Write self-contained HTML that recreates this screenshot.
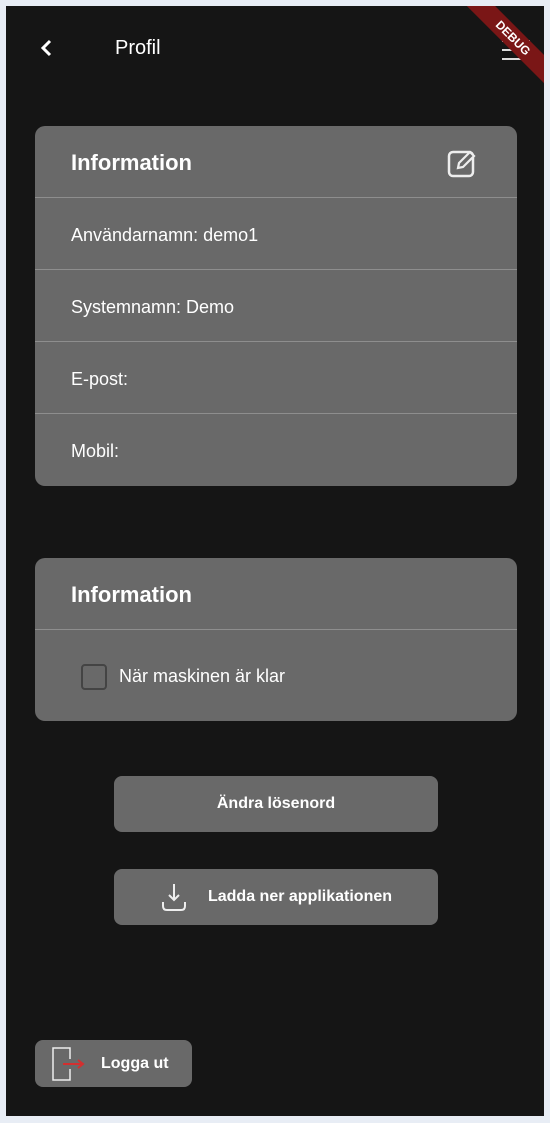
<!DOCTYPE html>
<html><head><meta charset="utf-8"><style>
*{margin:0;padding:0;box-sizing:border-box}
body{width:550px;height:1123px;background:#e8edf5;font-family:"Liberation Sans",sans-serif;position:relative;overflow:hidden;color:#fff}
.app{position:absolute;left:6px;top:6px;width:538px;height:1110px;background:#151515;overflow:hidden}
.card{position:absolute;left:29px;width:482px;background:#696969;border-radius:10px}
.hd{height:72px;font-size:22px;font-weight:bold;padding:24px 0 0 36px;border-bottom:1px solid #8e8e8e}
.row{height:72px;font-size:18px;padding:27px 0 0 36px;border-bottom:1px solid #8e8e8e}
.row:last-child{border-bottom:none}
.btn{position:absolute;background:#696969;border-radius:8px;font-weight:bold;font-size:16px;display:flex;align-items:center;justify-content:center}
.ribbon{position:absolute;right:-44px;top:22px;width:150px;height:20px;background:#7a1616;transform:rotate(45deg);font-size:12px;font-weight:bold;text-align:center;line-height:20px}
</style></head><body>
<div class="app">
<svg style="position:absolute;left:34px;top:33px" width="14" height="18" viewBox="0 0 14 18"><path d="M10 2 L3 9 L10 16" stroke="#fff" stroke-width="3" fill="none"/></svg>
<div style="position:absolute;left:109px;top:31px;font-size:20px">Profil</div>
<div style="position:absolute;left:496px;top:34px;width:28px;height:2px;background:#ddd;box-shadow:0 9px 0 #ddd,0 18px 0 #ddd"></div>
<div class="ribbon">DEBUG</div>

<div class="card" style="top:120px">
<div class="hd">Information</div>
<svg style="position:absolute;right:40px;top:22px" width="30" height="30" viewBox="0 0 30 30"><rect x="2" y="4" width="24" height="24" rx="4" stroke="#eee" stroke-width="2.5" fill="none"/><path d="M11 20 L12 15 L23 4 L27 8 L16 19 Z" stroke="#eee" stroke-width="2.2" fill="#696969"/></svg>
<div class="row">Användarnamn: demo1</div>
<div class="row">Systemnamn: Demo</div>
<div class="row">E-post:</div>
<div class="row">Mobil:</div>
</div>

<div class="card" style="top:552px;height:163px">
<div class="hd">Information</div>
<div style="position:absolute;left:46px;top:106px;width:26px;height:26px;border:2.5px solid #444;border-radius:4px"></div>
<div style="position:absolute;left:84px;top:108px;font-size:18px">När maskinen är klar</div>
</div>

<div class="btn" style="left:108px;top:770px;width:324px;height:56px">Ändra lösenord</div>
<div class="btn" style="left:108px;top:863px;width:324px;height:56px">
<svg width="28" height="30" viewBox="0 0 28 30" style="margin-right:20px"><path d="M14 2 V18 M9 13 L14 18 L19 13 M3 20 V24 Q3 28 7 28 H21 Q25 28 25 24 V20" stroke="#eee" stroke-width="2" fill="none"/></svg>Ladda ner applikationen</div>

<div class="btn" style="left:29px;top:1034px;width:157px;height:47px;justify-content:flex-start;padding-left:17px">
<svg width="34" height="34" viewBox="0 0 34 34" style="margin-right:15px"><path d="M18 12 V1 H1 V33 H18 V22" stroke="#eee" stroke-width="1.5" fill="none"/><path d="M11 17 H30 M26 13 L31 17 L26 21" stroke="#d32f2f" stroke-width="2" fill="none"/></svg>Logga ut</div>
</div>
</body></html>
